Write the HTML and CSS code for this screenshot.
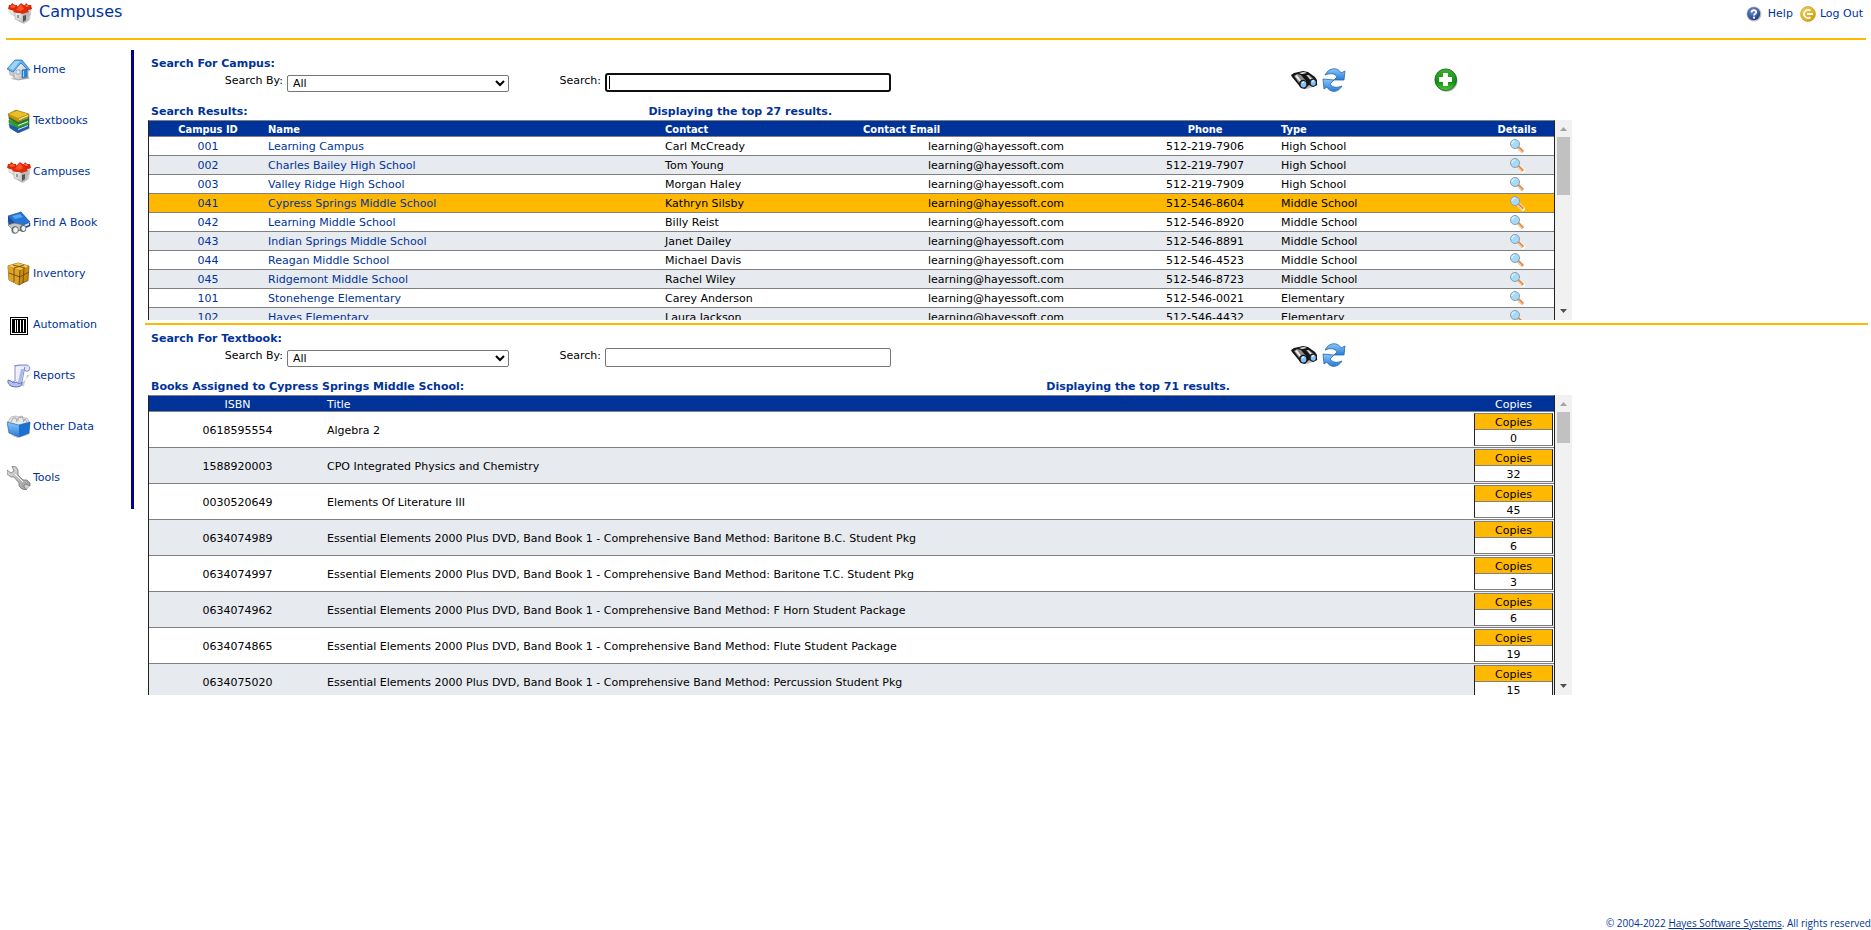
FILE: index.html
```html
<!DOCTYPE html>
<html lang="en">
<head>
    <meta charset="UTF-8">
    <meta name="viewport" content="width=device-width, initial-scale=1.0">
    <title>Campuses</title>
    <link rel="stylesheet" href="styles.css">
</head>
<body>
    <!-- Shared icons -->
    <svg class="sprite" aria-hidden="true">
        <defs>
            <linearGradient id="gBlue" x1="0" y1="0" x2="0" y2="1"><stop offset="0" stop-color="#8cc8f8"/><stop offset="1" stop-color="#2a7ad8"/></linearGradient>
            <linearGradient id="gWall" x1="0" y1="0" x2="1" y2="1"><stop offset="0" stop-color="#ffffff"/><stop offset="1" stop-color="#b0b0b0"/></linearGradient>
            <linearGradient id="gGreen" x1="0" y1="0" x2="0" y2="1"><stop offset="0" stop-color="#3fae32"/><stop offset=".6" stop-color="#129012"/><stop offset="1" stop-color="#4fc83c"/></linearGradient>
            <linearGradient id="gGold" x1="0" y1="0" x2="1" y2="1"><stop offset="0" stop-color="#f5cf55"/><stop offset="1" stop-color="#d09a00"/></linearGradient>
            <linearGradient id="gSteel" x1="0" y1="0" x2="1" y2="1"><stop offset="0" stop-color="#e4e4e4"/><stop offset="1" stop-color="#969696"/></linearGradient>
            <radialGradient id="gNavy" cx=".4" cy=".3" r=".8"><stop offset="0" stop-color="#6c8cd0"/><stop offset="1" stop-color="#16357c"/></radialGradient>
        </defs>
        <symbol id="campus" viewBox="0 0 24 24">
            <path d="M10 20l6 3 6-4 1-7z" fill="#000" opacity=".18"/>
            <path d="M2 8h6v8l-6-4zM17 8h6l-1 6-4 3z" fill="url(#gWall)" stroke="#aaa" stroke-width=".5"/>
            <path d="M0 8l1-4 2 0 1-2 3 2 2 0 1 4-4 2zM14 5l3-1 1-2 2 2 3 0 1 4-6 2z" fill="#d92808"/>
            <path d="M2 5l4-1 2 2-4 1zM17 4l3 0 1 2-3 0z" fill="#ff6038"/>
            <path d="M7 11l6-3 7 3v8l-5 3-8-4z" fill="url(#gWall)" stroke="#999" stroke-width=".5"/>
            <path d="M14 13l6-2v8l-5 3z" fill="#bbb"/>
            <path d="M5 11l4-5 4-4 4 3 4 6-7 2-2-1-3 0z" fill="#de2c0a"/>
            <path d="M8 9l5-6 3 5-3 2z" fill="#ff5228"/>
            <path d="M9 14h2v3H9z" fill="#999"/>
            <path d="M15 15l3-1v5l-3 2z" fill="#555"/>
        </symbol>
        <symbol id="home" viewBox="0 0 24 24">
            <path d="M3 20l4 2 16-1-2-3z" fill="#000" opacity=".2"/>
            <path d="M2 11l5-7 6 8v9L3 17z" fill="#c9ced3" stroke="#999" stroke-width=".5"/>
            <path d="M7 11l7-6 7 6v9l-10 2-4-2z" fill="url(#gWall)" stroke="#888" stroke-width=".6"/>
            <path d="M0 11L8 2l7 0 8 10-2 0-7-7-8 9z" fill="#64b0ee" stroke="#2877bd" stroke-width=".8"/>
            <path d="M2 10l6-7h5L6 12z" fill="#9bd4fa"/>
            <path d="M9 12h4v4H9z" fill="#d5ecff" stroke="#789" stroke-width=".6"/>
            <path d="M15 12l5-1v8l-5 1z" fill="#2c86d5" stroke="#1c5b9f" stroke-width=".5"/>
            <path d="M16 13l1-.3v6l-1 .3z" fill="#9cd5ff"/>
        </symbol>
        <symbol id="books" viewBox="0 0 24 24">
            <path d="M5 21l6 3 12-4-2-3z" fill="#000" opacity=".2"/>
            <path d="M2 15l9 4 11-4v4l-11 5-8-5z" fill="#1d5dad" stroke="#163d78" stroke-width=".5"/>
            <path d="M11 20l10-4v1l-10 4z" fill="#e9edf2"/>
            <path d="M2 11l9 4 11-4v4l-11 4-9-5z" fill="#2fa329" stroke="#146514" stroke-width=".5"/>
            <path d="M11 16l10-4v1l-10 4z" fill="#f0f4ea"/>
            <path d="M2 7l9 4 11-4v4l-11 4-9-5z" fill="#1f7a3a" stroke="#145c24" stroke-width=".5"/>
            <path d="M11 12l10-4v1l-10 4z" fill="#edf0f5"/>
            <path d="M1 5l8-4 13 4v3l-11 5-9-5z" fill="#c69408" stroke="#826000" stroke-width=".5"/>
            <path d="M2 5l8-3 11 3-10 4z" fill="#eac02c"/>
            <path d="M12 10l9-4v1l-9 4z" fill="#fff6c8"/>
        </symbol>
        <symbol id="find" viewBox="0 0 24 24">
            <path d="M1 10l9 6 13-4v3l-12 5-9-6z" fill="#174fa2" stroke="#103674" stroke-width=".5"/>
            <path d="M11 16l11-4v2l-11 4z" fill="#dfe6ef"/>
            <path d="M1 5l13-4 9 10-12 5z" fill="#2375d6" stroke="#123f89" stroke-width=".6"/>
            <path d="M1 5l10 10v2L1 10z" fill="#174fa2"/>
            <path d="M5 5l8-2 3 3-8 2z" fill="#58a6f2"/>
            <path d="M1 14l6-2 10 2 1 5-11 1z" fill="#c5c5c5" stroke="#666" stroke-width=".6"/>
            <ellipse cx="8" cy="19" rx="3.500" ry="3.800" fill="#666"/>
            <ellipse cx="8.500" cy="19" rx="2.300" ry="2.700" fill="#e8f5ff"/>
            <ellipse cx="16" cy="17.500" rx="3.200" ry="3.500" fill="#666"/>
            <ellipse cx="16.500" cy="17.500" rx="2.100" ry="2.400" fill="#e8f5ff"/>
        </symbol>
        <symbol id="box" viewBox="0 0 24 24">
            <path d="M12 23l10-4-1-2z" fill="#000" opacity=".3"/>
            <path d="M1 4l10-3 11 3-1 14-9 5L2 18z" fill="#c98c10" stroke="#825404" stroke-width=".8"/>
            <path d="M1 4l10-3 11 3-9 4z" fill="#f3c751"/>
            <path d="M1 4l12 4-1 15-10-5z" fill="#dda22a"/>
            <path d="M2 11l11 4 9-5M7 6v14M17 6l-1 15M6 3l12 3M17 3L7 6M13 8l-1 15" fill="none" stroke="#6f4a08" stroke-width=".9"/>
        </symbol>
        <symbol id="barcode" viewBox="0 0 24 24">
            <path d="M3 4h18v18H3z" fill="#000"/>
            <path d="M4 5h16v16H4z" fill="#fff"/>
            <path d="M5 6h14v14H5z" fill="#000"/>
            <path d="M8 7h1v12H8zM10 7h1v12h-1zM13 7h1v12h-1zM16 7h1v12h-1z" fill="#fff"/>
        </symbol>
        <symbol id="report" viewBox="0 0 24 24">
            <path d="M12 22l5 0 3-11 3 0z" fill="#000" opacity=".2"/>
            <path d="M8 3c2-2 4-2 9-1l3 1-3 4-2 11-2 4H4l-1-3 5-2z" fill="#eef1fd" stroke="#6a76c4" stroke-width=".8"/>
            <path d="M14 5l3 0-3 13-3 3 0-3z" fill="#8f9fe4" opacity=".7"/>
            <path d="M7 2c3-1 7-1 12-1 4 0 5 5 2 6-2 1-5-1-3-4" fill="#dfe5fb" stroke="#5a66b4" stroke-width=".8"/>
            <path d="M1 16c-1 5 4 7 8 7 5 0 6-2 6-5-2 2-4 2-5 0-2 1-5 1-6-1z" fill="#b3c0f4" stroke="#4d5aae" stroke-width=".8"/>
        </symbol>
        <symbol id="data" viewBox="0 0 24 24">
            <path d="M4 20l6 3 12-3 1-3z" fill="#000" opacity=".2"/>
            <path d="M1 7l3-5 5-1 2 1 4-1 2 2 3 0 3 5-1 4H3z" fill="#e9e9e9" stroke="#999" stroke-width=".6"/>
            <path d="M4 7l2-4 3 0 1 4M11 6l0-3 4-1 2 4M16 7l2-3 2 3" fill="none" stroke="#8a8a8a" stroke-width=".7"/>
            <path d="M0 7l12 3 11-3-1 11-10 4-10-4z" fill="url(#gBlue)" stroke="#1458a8" stroke-width=".6"/>
            <path d="M12 10l11-3-1 11-10 4z" fill="#1a70d0"/>
        </symbol>
        <symbol id="tools" viewBox="0 0 24 24">
            <path d="M17 23l4 0 2-3-8-8z" fill="#000" opacity=".2"/>
            <path d="M5 0l4 1 2 3v5l5 5 4 0 3 3 0 3-4-2-2 1 0 2 3 3-5-1-3-3v-3l-5-6H4L0 8V4l4 3 3-2z" fill="url(#gSteel)" stroke="#777" stroke-width=".8"/>
            <path d="M8 8l8 8" stroke="#fff" stroke-width="1"/>
        </symbol>
        <symbol id="binoculars" viewBox="0 0 28 24">
            <path d="M12 20l5 1 11-4-2-3z" fill="#000" opacity=".25"/>
            <path d="M1 7l3-2 9-2 5 1 7 5 2 3 0 5-4 2-4-2-2 2-2 2-4-1-4-5-5-6z" fill="#151515"/>
            <path d="M4 8l3-2 4 1 5 6-4 3-3-1zM16 7l3 0 5 4-3 2z" fill="#8a8a8a"/>
            <path d="M5 8l2-1 5 7-2 0zM9 5l5-1 3 1-5 1zM17 7l1 0 4 4-1 1z" fill="#eee"/>
            <ellipse cx="13" cy="16" rx="4" ry="4.300" fill="#151515"/>
            <ellipse cx="13.500" cy="16.300" rx="2.800" ry="3.200" fill="#84c2ff"/>
            <ellipse cx="23" cy="14.500" rx="3.600" ry="4" fill="#222"/>
            <ellipse cx="23.200" cy="14.700" rx="2.500" ry="3" fill="#84c2ff"/>
            <path d="M12 15l2-1M22 13.500l2-1" stroke="#fff" stroke-width="1.200"/>
        </symbol>
        <symbol id="refresh" viewBox="0 0 24 24">
            <path d="M3 7C7-1 16-1 19 5l4-2-1 9-10 0 3-3C13 5 8 5 3 7z" fill="url(#gBlue)" stroke="#1e69b8" stroke-width=".8"/>
            <path d="M20 18c-4 7-12 7-15 1l-3 2-1-10 11 1-4 4c3 4 7 4 12 2z" fill="url(#gBlue)" stroke="#1e69b8" stroke-width=".8"/>
        </symbol>
        <symbol id="add" viewBox="0 0 24 24">
            <circle cx="12.500" cy="12.800" r="11" fill="#000" opacity=".3"/>
            <circle cx="11.700" cy="11.700" r="10.800" fill="url(#gGreen)" stroke="#0a650c" stroke-width=".8"/>
            <path d="M9 5h5v4h4v5h-4v4H9v-4H5V9h4z" fill="#fff"/>
        </symbol>
        <symbol id="lens" viewBox="0 0 16 16">
            <path d="M9 9l5 5" stroke="#fff" stroke-width="4" stroke-linecap="round"/>
            <path d="M9 9l5 5" stroke="#e09050" stroke-width="3"/>
            <path d="M9 10l4 4" stroke="#ffd09c" stroke-width="1"/>
            <circle cx="6" cy="6" r="4.500" fill="#a4dafa" stroke="#8a9ead" stroke-width="1"/>
            <path d="M3 6c0-2 1-3 3-3" fill="none" stroke="#fff" stroke-width="1"/>
        </symbol>
        <symbol id="help" viewBox="0 0 16 16">
            <circle cx="8" cy="8" r="7.500" fill="#c0c0c0"/>
            <circle cx="7.700" cy="7.700" r="6.500" fill="url(#gNavy)"/>
            <path d="M5.500 6.500C5.500 3.300 10.500 3.600 10.300 6.300 10.200 7.800 8 7.700 8 9.500" fill="none" stroke="#fff" stroke-width="1.800"/>
            <circle cx="8" cy="11.700" r="1.100" fill="#fff"/>
        </symbol>
        <symbol id="logout" viewBox="0 0 16 16">
            <circle cx="8" cy="8" r="7.500" fill="url(#gGold)" stroke="#bd9020" stroke-width=".6"/>
            <path d="M10.500 4.800A4 4 0 1 0 10.500 11.200" fill="none" stroke="#fff" stroke-width="1.700"/>
            <path d="M7 8h6" stroke="#fff" stroke-width="2"/>
        </symbol>
        <symbol id="up" viewBox="0 0 17 17"><path d="M5 11l3.500-4L12 11z" fill="#a3a3a3"/></symbol>
        <symbol id="down" viewBox="0 0 17 17"><path d="M5 6l3.500 4L12 6z" fill="#505050"/></symbol>
    </svg>

    <header class="header">
        <svg class="icon"><use href="#campus"/></svg>
        <h1>Campuses</h1>
        <div class="user-links">
            <a class="help" href="#"><svg class="icon-small"><use href="#help"/></svg>Help</a>
            <a class="logout" href="#"><svg class="icon-small"><use href="#logout"/></svg>Log Out</a>
        </div>
    </header>

    <div class="page">
        <nav class="menu">
            <a href="#"><svg class="icon"><use href="#home"/></svg>Home</a>
            <a href="#"><svg class="icon"><use href="#books"/></svg>Textbooks</a>
            <a href="#"><svg class="icon"><use href="#campus"/></svg>Campuses</a>
            <a href="#"><svg class="icon"><use href="#find"/></svg>Find A Book</a>
            <a href="#"><svg class="icon"><use href="#box"/></svg>Inventory</a>
            <a href="#"><svg class="icon"><use href="#barcode"/></svg>Automation</a>
            <a href="#"><svg class="icon"><use href="#report"/></svg>Reports</a>
            <a href="#"><svg class="icon"><use href="#data"/></svg>Other Data</a>
            <a href="#"><svg class="icon"><use href="#tools"/></svg>Tools</a>
        </nav>

        <main class="main">
            <!-- Campus search -->
            <section class="section">
                <form class="search">
                    <div class="search-fields">
                        <h2>Search For Campus:</h2>
                        <div class="fields">
                            <label class="by" for="campusBy">Search By:</label>
                            <select id="campusBy"><option>All</option></select>
                            <label class="term" for="campusTerm">Search:</label>
                            <input class="active" type="text" id="campusTerm">
                        </div>
                    </div>
                    <div class="actions">
                        <button type="button" class="find" aria-label="Search"><svg><use href="#binoculars"/></svg></button>
                        <button type="button" aria-label="Refresh"><svg><use href="#refresh"/></svg></button>
                        <button type="button" class="add" aria-label="Add"><svg><use href="#add"/></svg></button>
                    </div>
                </form>
                <div class="caption">
                    <h2 class="campus-caption">Search Results:</h2>
                    <h2>Displaying the top 27 results.</h2>
                </div>
                <div class="scroller campus-scroller">
                    <div class="scroll-view">
                        <table class="grid campuses">
                            <thead>
                                <tr><th class="id">Campus ID</th><th>Name</th><th class="contact">Contact</th><th class="email-head">Contact Email</th><th class="phone">Phone</th><th class="type">Type</th><th class="details">Details</th></tr>
                            </thead>
                            <tbody>
                                <tr><td class="mid"><a href="#">001</a></td><td><a href="#">Learning Campus</a></td><td>Carl McCready</td><td class="mid">learning@hayessoft.com</td><td class="mid">512-219-7906</td><td>High School</td><td class="mid"><a href="#" aria-label="Details"><svg class="lens"><use href="#lens"/></svg></a></td></tr>
                                <tr><td class="mid"><a href="#">002</a></td><td><a href="#">Charles Bailey High School</a></td><td>Tom Young</td><td class="mid">learning@hayessoft.com</td><td class="mid">512-219-7907</td><td>High School</td><td class="mid"><a href="#" aria-label="Details"><svg class="lens"><use href="#lens"/></svg></a></td></tr>
                                <tr><td class="mid"><a href="#">003</a></td><td><a href="#">Valley Ridge High School</a></td><td>Morgan Haley</td><td class="mid">learning@hayessoft.com</td><td class="mid">512-219-7909</td><td>High School</td><td class="mid"><a href="#" aria-label="Details"><svg class="lens"><use href="#lens"/></svg></a></td></tr>
                                <tr class="selected"><td class="mid"><a href="#">041</a></td><td><a href="#">Cypress Springs Middle School</a></td><td>Kathryn Silsby</td><td class="mid">learning@hayessoft.com</td><td class="mid">512-546-8604</td><td>Middle School</td><td class="mid"><a href="#" aria-label="Details"><svg class="lens"><use href="#lens"/></svg></a></td></tr>
                                <tr><td class="mid"><a href="#">042</a></td><td><a href="#">Learning Middle School</a></td><td>Billy Reist</td><td class="mid">learning@hayessoft.com</td><td class="mid">512-546-8920</td><td>Middle School</td><td class="mid"><a href="#" aria-label="Details"><svg class="lens"><use href="#lens"/></svg></a></td></tr>
                                <tr><td class="mid"><a href="#">043</a></td><td><a href="#">Indian Springs Middle School</a></td><td>Janet Dailey</td><td class="mid">learning@hayessoft.com</td><td class="mid">512-546-8891</td><td>Middle School</td><td class="mid"><a href="#" aria-label="Details"><svg class="lens"><use href="#lens"/></svg></a></td></tr>
                                <tr><td class="mid"><a href="#">044</a></td><td><a href="#">Reagan Middle School</a></td><td>Michael Davis</td><td class="mid">learning@hayessoft.com</td><td class="mid">512-546-4523</td><td>Middle School</td><td class="mid"><a href="#" aria-label="Details"><svg class="lens"><use href="#lens"/></svg></a></td></tr>
                                <tr><td class="mid"><a href="#">045</a></td><td><a href="#">Ridgemont Middle School</a></td><td>Rachel Wiley</td><td class="mid">learning@hayessoft.com</td><td class="mid">512-546-8723</td><td>Middle School</td><td class="mid"><a href="#" aria-label="Details"><svg class="lens"><use href="#lens"/></svg></a></td></tr>
                                <tr><td class="mid"><a href="#">101</a></td><td><a href="#">Stonehenge Elementary</a></td><td>Carey Anderson</td><td class="mid">learning@hayessoft.com</td><td class="mid">512-546-0021</td><td>Elementary</td><td class="mid"><a href="#" aria-label="Details"><svg class="lens"><use href="#lens"/></svg></a></td></tr>
                                <tr><td class="mid"><a href="#">102</a></td><td><a href="#">Hayes Elementary</a></td><td>Laura Jackson</td><td class="mid">learning@hayessoft.com</td><td class="mid">512-546-4432</td><td>Elementary</td><td class="mid"><a href="#" aria-label="Details"><svg class="lens"><use href="#lens"/></svg></a></td></tr>
                            </tbody>
                        </table>
                    </div>
                    <div class="scrollbar">
                        <svg><use href="#up"/></svg>
                        <div class="thumb"></div>
                        <svg><use href="#down"/></svg>
                    </div>
                </div>
            </section>

            <!-- Textbook search -->
            <section class="section">
                <form class="search">
                    <div class="search-fields">
                        <h2>Search For Textbook:</h2>
                        <div class="fields">
                            <label class="by" for="bookBy">Search By:</label>
                            <select id="bookBy"><option>All</option></select>
                            <label class="term" for="bookTerm">Search:</label>
                            <input type="text" id="bookTerm">
                        </div>
                    </div>
                    <div class="actions">
                        <button type="button" class="find" aria-label="Search"><svg><use href="#binoculars"/></svg></button>
                        <button type="button" aria-label="Refresh"><svg><use href="#refresh"/></svg></button>
                    </div>
                </form>
                <div class="caption">
                    <h2 class="book-caption">Books Assigned to Cypress Springs Middle School:</h2>
                    <h2>Displaying the top 71 results.</h2>
                </div>
                <div class="scroller book-scroller">
                    <div class="scroll-view">
                        <table class="grid books">
                            <thead>
                                <tr><th class="isbn">ISBN</th><th>Title</th><th class="copies-head">Copies</th></tr>
                            </thead>
                            <tbody>
                                <tr><td class="mid">0618595554</td><td>Algebra 2</td><td class="mid"><div class="copies"><span class="label">Copies</span><span>0</span></div></td></tr>
                                <tr><td class="mid">1588920003</td><td>CPO Integrated Physics and Chemistry</td><td class="mid"><div class="copies"><span class="label">Copies</span><span>32</span></div></td></tr>
                                <tr><td class="mid">0030520649</td><td>Elements Of Literature III</td><td class="mid"><div class="copies"><span class="label">Copies</span><span>45</span></div></td></tr>
                                <tr><td class="mid">0634074989</td><td>Essential Elements 2000 Plus DVD, Band Book 1 - Comprehensive Band Method: Baritone B.C. Student Pkg</td><td class="mid"><div class="copies"><span class="label">Copies</span><span>6</span></div></td></tr>
                                <tr><td class="mid">0634074997</td><td>Essential Elements 2000 Plus DVD, Band Book 1 - Comprehensive Band Method: Baritone T.C. Student Pkg</td><td class="mid"><div class="copies"><span class="label">Copies</span><span>3</span></div></td></tr>
                                <tr><td class="mid">0634074962</td><td>Essential Elements 2000 Plus DVD, Band Book 1 - Comprehensive Band Method: F Horn Student Package</td><td class="mid"><div class="copies"><span class="label">Copies</span><span>6</span></div></td></tr>
                                <tr><td class="mid">0634074865</td><td>Essential Elements 2000 Plus DVD, Band Book 1 - Comprehensive Band Method: Flute Student Package</td><td class="mid"><div class="copies"><span class="label">Copies</span><span>19</span></div></td></tr>
                                <tr><td class="mid">0634075020</td><td>Essential Elements 2000 Plus DVD, Band Book 1 - Comprehensive Band Method: Percussion Student Pkg</td><td class="mid"><div class="copies"><span class="label">Copies</span><span>15</span></div></td></tr>
                            </tbody>
                        </table>
                    </div>
                    <div class="scrollbar">
                        <svg><use href="#up"/></svg>
                        <div class="thumb"></div>
                        <svg><use href="#down"/></svg>
                    </div>
                </div>
            </section>
        </main>
    </div>

    <footer class="footer">© 2004-2022 <a href="#">Hayes Software Systems</a>. All rights reserved</footer>
</body>
</html>
```

FILE: styles.css
```css
* {
    margin: 0;
    padding: 0;
    box-sizing: border-box;
}
body {
    display: flex;
    flex-direction: column;
    min-height: 100vh;
    background: #fff;
    color: #000;
    font-family: "DejaVu Sans", Verdana, sans-serif;
    font-size: 11px;
    line-height: 14px;
}
a {
    color: #003399;
    text-decoration: none;
}
svg {
    display: block;
}
.sprite {
    position: absolute;
    width: 0;
    height: 0;
}
.icon {
    width: 24px;
    height: 24px;
}
.icon-small {
    width: 16px;
    height: 16px;
}

/* header */
.header {
    display: flex;
    align-items: flex-start;
    height: 40px;
    margin: 0 5px 0 6px;
    padding: 1px 3px 0 2px;
    border-bottom: 2px solid #ffb800;
}
.header h1 {
    margin-left: 7px;
    color: #003399;
    font-size: 16px;
    font-weight: normal;
    line-height: 22px;
}
.user-links {
    display: flex;
    gap: 7px;
    margin-left: auto;
    padding-top: 5px;
}
.user-links a {
    display: flex;
    align-items: center;
}
.help {
    gap: 6px;
}
.logout {
    gap: 4px;
}

/* left menu */
.page {
    display: flex;
    align-items: flex-start;
    padding: 10px 3px 0 7px;
}
.menu {
    flex: none;
    width: 127px;
    border-right: 3px solid #00008b;
}
.menu a {
    display: flex;
    gap: 2px;
    height: 51px;
    padding-top: 8px;
    line-height: 24px;
}

/* search sections */
.main {
    flex: 1;
    margin-left: 11px;
}
.section {
    padding-top: 6px;
}
.section + .section {
    margin-top: 3px;
    border-top: 2px solid #ffb800;
}
h2 {
    color: #003399;
    font-size: 11px;
    font-weight: bold;
    line-height: 16px;
}
.search {
    display: flex;
    align-items: center;
    height: 48px;
    padding-left: 6px;
}
.search-fields {
    align-self: flex-start;
}
.fields {
    display: flex;
    align-items: flex-start;
    gap: 4px;
}
.fields label {
    line-height: 18px;
    text-align: right;
}
.by {
    width: 132px;
}
.term {
    width: 88px;
}
select {
    width: 222px;
    height: 17px;
    margin-top: 3px;
    padding-left: 1px;
    border: 1px solid #767676;
    border-radius: 2px;
    background-color: #fff;
    color: #000;
    font-family: inherit;
    font-size: 11px;
}
input {
    width: 286px;
    height: 19px;
    margin-top: 1px;
    padding: 0 4px;
    border: 1px solid #767676;
    border-radius: 2px;
    font-family: inherit;
    font-size: 11px;
}
input.active {
    border: 2px solid #101010;
    border-radius: 3px;
    background: linear-gradient(#000, #000) 2px center / 1px 13px no-repeat;
}
.actions {
    display: flex;
    gap: 4px;
    margin-left: 399px;
}
.actions button {
    width: 24px;
    height: 24px;
    border: none;
    background: none;
    cursor: pointer;
}
.actions .find {
    width: 28px;
}
.actions .add {
    margin-left: 84px;
}
.actions svg {
    width: 100%;
    height: 100%;
}
.caption {
    display: flex;
    width: calc(83% - 3px);
    height: 16px;
    padding-left: 6px;
}
.campus-caption {
    width: 35%;
}
.book-caption {
    width: 63%;
}

/* scrolling lists */
.scroller {
    display: flex;
    width: calc(83% - 3px);
    padding-left: 3px;
}
.campus-scroller {
    height: 200px;
}
.book-scroller {
    height: 300px;
}
.scroll-view {
    flex: 1;
    overflow: hidden;
}
.scrollbar {
    display: flex;
    flex-direction: column;
    width: 17px;
    background: #f1f1f1;
}
.scrollbar svg {
    width: 17px;
    height: 17px;
}
.thumb {
    height: 58px;
    margin: 0 2px auto;
    background: #c1c1c1;
}
.book-scroller .thumb {
    height: 31px;
}

/* tables */
.grid {
    width: 100%;
    table-layout: fixed;
    border: 1px solid #222;
    border-top-color: #808080;
    border-spacing: 0;
}
.grid th {
    height: 16px;
    padding: 2px 1px 0;
    border-bottom: 1px solid #808080;
    background: #003399;
    color: #fff;
    font-weight: normal;
    line-height: 13px;
    text-align: left;
}
.grid td {
    height: 19px;
    padding: 2px 1px 0;
    border-bottom: 1px solid #808080;
}
.grid td:last-child {
    padding-top: 0;
}
.campuses th {
    font-family: "DejaVu Sans Condensed", "DejaVu Sans", sans-serif;
    font-weight: bold;
}
.books td {
    height: 36px;
}
.grid tr:nth-child(even) td {
    background: #e7eaee;
}
.grid tr.selected td {
    background: #ffb800;
}
.grid .mid,
.grid .id,
.grid .phone,
.grid .details,
.grid .isbn,
.grid .copies-head {
    text-align: center;
}
.id {
    width: 118px;
}
.contact {
    width: 198px;
}
.email-head {
    width: 268px;
}
.phone {
    width: 150px;
}
.type {
    width: 200px;
}
.details {
    width: 74px;
}
.isbn {
    width: 177px;
}
.copies-head {
    width: 81px;
}
.lens {
    width: 16px;
    height: 16px;
    margin: 0 auto;
}
.copies {
    border: 1px solid #222;
    border-top-color: #808080;
    border-bottom-color: #808080;
    background: #fff;
}
.copies span {
    display: block;
    height: 15px;
    line-height: 17px;
}
.copies .label {
    height: 16px;
    border-bottom: 1px solid #808080;
    background: #ffb800;
}

.footer {
    margin-top: auto;
    color: #003399;
    font-family: "Open Sans", "Noto Sans", sans-serif;
    font-size: 10px;
    text-align: right;
}
.footer a {
    text-decoration: underline;
}
```
